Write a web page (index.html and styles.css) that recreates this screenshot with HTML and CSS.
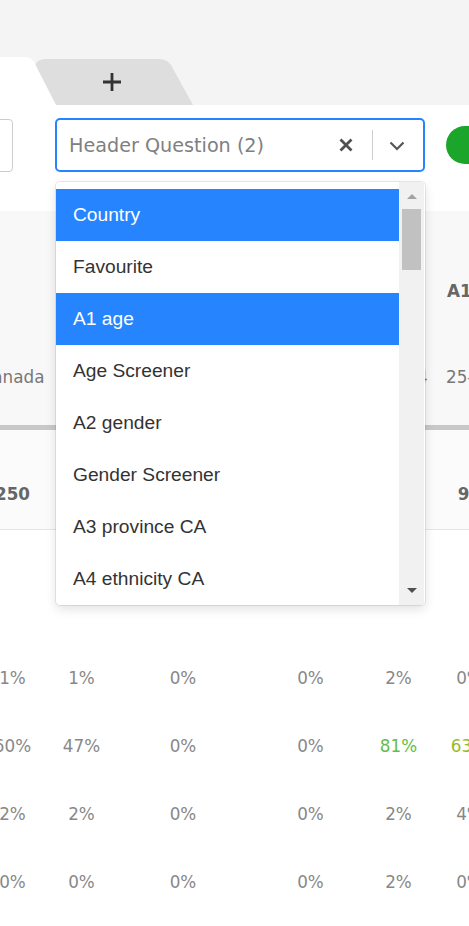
FILE: index.html
```html
<!DOCTYPE html>
<html lang="en">
<head>
<meta charset="utf-8">
<title>Crosstab</title>
<link rel="stylesheet" href="styles.css">
</head>
<body>
<div class="page">
  <header class="topbar">
    <div class="tabs">
      <div class="tab tab-active"></div>
      <div class="tab tab-add">
        <svg class="plus" width="20" height="20" viewBox="0 0 20 20"><path d="M10 1V19M1 10H19" stroke="#333" stroke-width="2.8" fill="none"/></svg>
      </div>
    </div>
  </header>

  <main class="content">
    <div class="toolbar">
      <div class="input-stub"></div>
      <div class="select-wrap">
        <div class="select">
          <span class="placeholder">Header Question (2)</span>
          <span class="clear">
            <svg width="14" height="14" viewBox="0 0 14 14"><path d="M1.5 1.5L12.5 12.5M12.5 1.5L1.5 12.5" stroke="#505050" stroke-width="2.8" fill="none"/></svg>
          </span>
          <span class="sep"></span>
          <span class="chev">
            <svg width="16" height="10" viewBox="0 0 16 10"><path d="M1.5 1.5L8 8L14.5 1.5" stroke="#555" stroke-width="2.2" fill="none"/></svg>
          </span>
        </div>
        <div class="menu">
          <div class="menu-list">
            <div class="opt sel">Country</div>
            <div class="opt">Favourite</div>
            <div class="opt sel">A1 age</div>
            <div class="opt">Age Screener</div>
            <div class="opt">A2 gender</div>
            <div class="opt">Gender Screener</div>
            <div class="opt">A3 province CA</div>
            <div class="opt">A4 ethnicity CA</div>
          </div>
          <div class="scrollbar">
            <div class="arrow up"></div>
            <div class="thumb"></div>
            <div class="track-fill"></div>
            <div class="arrow down"></div>
          </div>
        </div>
      </div>
      <div class="toggle"></div>
    </div>

    <section class="table">
      <div class="thead">
        <div class="grid-row hrow1">
          <div></div><div></div><div></div><div></div><div></div>
          <div class="hlabel">A1 age</div>
        </div>
        <div class="grid-row hrow2">
          <div>Canada</div><div></div><div></div><div></div>
          <div class="shift">18-24</div>
          <div class="hval">25-34</div>
        </div>
      </div>
      <div class="bar"></div>
      <div class="grid-row total">
        <div>250</div><div></div><div></div><div></div><div></div><div>96</div>
      </div>
      <div class="tbody">
        <div class="grid-row brow"><div>1%</div><div>1%</div><div>0%</div><div>0%</div><div>2%</div><div>0%</div></div>
        <div class="grid-row brow"><div>60%</div><div>47%</div><div>0%</div><div>0%</div><div class="hi">81%</div><div class="mid">63%</div></div>
        <div class="grid-row brow"><div>2%</div><div>2%</div><div>0%</div><div>0%</div><div>2%</div><div>4%</div></div>
        <div class="grid-row brow"><div>0%</div><div>0%</div><div>0%</div><div>0%</div><div>2%</div><div>0%</div></div>
      </div>
    </section>
  </main>
</div>
</body>
</html>
```

FILE: styles.css
```css
html, body {
  margin: 0;
  padding: 0;
  background: #ffffff;
}
.page {
  width: 469px;
  height: 926px;
  overflow: hidden;
  font-family: "DejaVu Sans", Verdana, sans-serif;
}

/* tab strip */
.topbar {
  height: 105px;
  background: #f4f4f4;
  display: flex;
  align-items: flex-end;
}
.tabs {
  display: flex;
  align-items: flex-end;
  height: 48px;
}
.tab-active {
  position: relative;
  z-index: 1;
  width: 56px;
  height: 48px;
  background: #ffffff;
  clip-path: path("M0 0 H24 Q31 0 34 5 L56 48 H0 Z");
}
.tab-add {
  width: 160px;
  height: 46px;
  margin-left: -21px;
  background: #dedede;
  clip-path: path("M0 46 V10 Q0 0 10 0 H124 Q132 0 136 6 L158 46 Z");
  display: flex;
  align-items: center;
  justify-content: center;
  padding-right: 6px;
  box-sizing: border-box;
}
.plus { display: block; }

/* toolbar */
.content { background: #ffffff; }
.toolbar {
  margin-top: 13px;
  height: 54px;
  display: flex;
  align-items: center;
}
.input-stub {
  width: 60px;
  height: 53px;
  margin-left: -47px;
  box-sizing: border-box;
  border: 1px solid #cccccc;
  border-radius: 4px;
  background: #fff;
  flex: none;
}
.select-wrap {
  position: relative;
  margin-left: 42px;
  width: 370px;
  flex: none;
  z-index: 5;
}
.select {
  box-sizing: border-box;
  height: 54px;
  border: 2px solid #2684ff;
  border-radius: 5px;
  background: #fff;
  display: flex;
  align-items: center;
  padding-left: 12px;
  padding-right: 2px;
}
.placeholder {
  flex: 1;
  font-size: 19.2px;
  color: #808080;
  white-space: nowrap;
}
.clear {
  width: 36px;
  display: flex;
  justify-content: center;
}
.clear svg, .chev svg { display: block; }
.sep {
  width: 1px;
  height: 30px;
  background: #cccccc;
  margin-left: 8px;
}
.chev {
  width: 48px;
  display: flex;
  justify-content: center;
  padding-top: 1px;
}
.toggle {
  margin-left: 21px;
  width: 60px;
  height: 38px;
  border-radius: 19px;
  background: #1ca52b;
  flex: none;
}

/* dropdown menu */
.menu {
  position: absolute;
  top: calc(100% + 10px);
  left: 1px;
  width: 369px;
  height: 423px;
  background: #fff;
  border-radius: 4px;
  box-shadow: 0 0 0 1px rgba(0,0,0,0.08), 0 4px 11px rgba(0,0,0,0.12);
  display: flex;
  overflow: hidden;
}
.menu-list {
  flex: 1;
  padding-top: 7px;
  overflow: hidden;
}
.opt {
  height: 52px;
  line-height: 52px;
  padding-left: 17px;
  font-family: "Liberation Sans", Arial, sans-serif;
  font-size: 19.2px;
  color: #333333;
  white-space: nowrap;
}
.opt.sel {
  background: #2684ff;
  color: #ffffff;
}
.scrollbar {
  width: 25px;
  margin-right: 1px;
  background: #f1f1f1;
  display: flex;
  flex-direction: column;
  align-items: center;
}
.arrow {
  width: 0;
  height: 0;
  border-left: 5px solid transparent;
  border-right: 5px solid transparent;
  flex: none;
}
.arrow.up {
  border-bottom: 5px solid #a3a3a3;
  margin-top: 12px;
  margin-bottom: 10px;
}
.arrow.down {
  border-top: 5px solid #505050;
  margin-top: 0;
  margin-bottom: 12px;
}
.thumb {
  width: 19px;
  height: 61px;
  background: #c1c1c1;
  flex: none;
}
.track-fill { flex: 1; }

/* table */
.table {
  font-size: 16.8px;
  color: #888888;
}
.grid-row {
  display: grid;
  grid-template-columns: 69px 69px 134px 121px 55px 87px;
  margin-left: -22px;
  text-align: center;
  white-space: nowrap;
}
.thead {
  margin-top: 39px;
  background: #f8f8f8;
}
.hrow1 {
  height: 110px;
  box-sizing: border-box;
  padding-top: 50px;
  align-items: center;
}
.hlabel {
  text-align: left;
  padding-left: 21px;
  font-weight: bold;
  color: #666666;
}
.hrow2 {
  height: 104px;
  box-sizing: border-box;
  padding-top: 8px;
  align-items: center;
  color: #777777;
}
.shift { padding-left: 8px; }
.hval {
  text-align: left;
  padding-left: 20px;
}
.bar {
  height: 5px;
  background: #c8c8c8;
}
.total {
  height: 100px;
  box-sizing: border-box;
  padding-top: 29px;
  align-items: center;
  background: #fbfbfb;
  border-bottom: 1px solid #e6e6e6;
  font-weight: bold;
  color: #666666;
}
.tbody {
  padding-top: 114px;
}
.brow {
  height: 68px;
  align-items: center;
}
.hi { color: #64bd45; }
.mid { color: #96b92c; }
```
